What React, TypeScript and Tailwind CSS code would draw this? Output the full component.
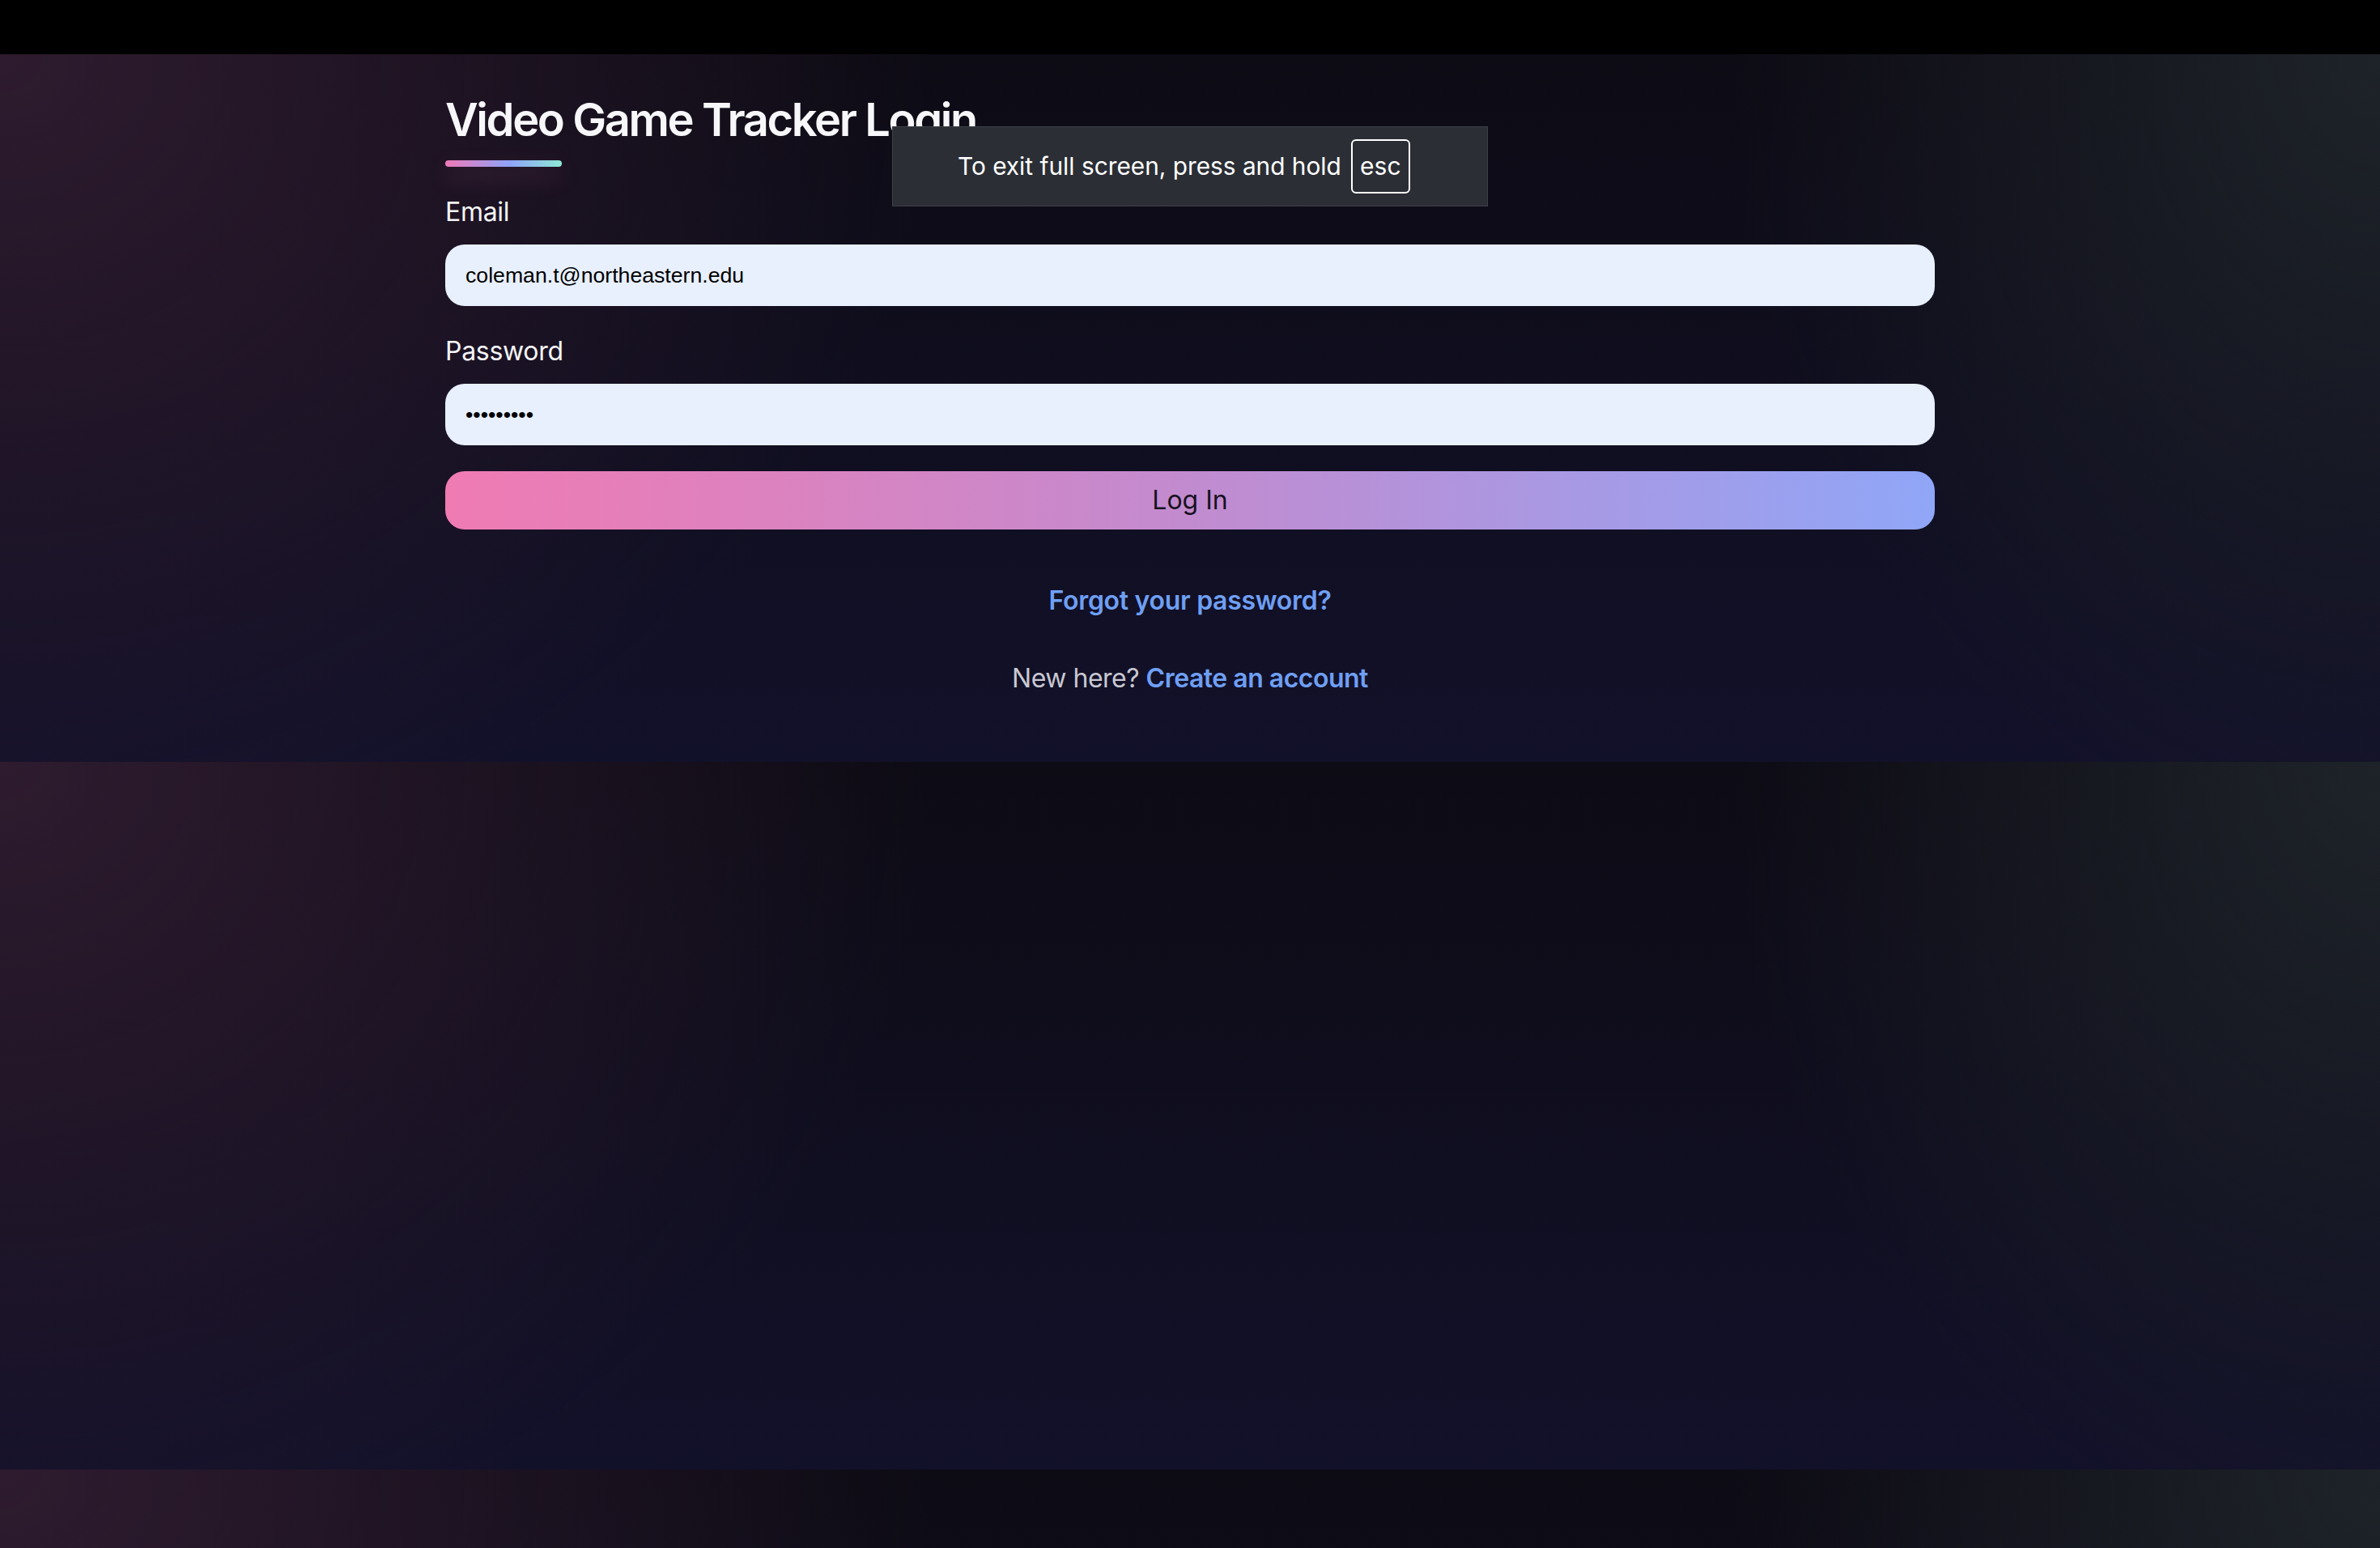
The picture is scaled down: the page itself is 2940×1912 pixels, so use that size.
import { useState } from "react"

const pageBg =
  "bg-[radial-gradient(1150px_1050px_at_0_0,#2e1b2f,transparent),radial-gradient(800px_1000px_at_100%_0,#1e2329,transparent),linear-gradient(180deg,#0d0b14,#12112a)] bg-[length:100%_874px] bg-repeat-y"

function Field({ label, type, value }: { label: string; type: string; value: string }) {
  return (
    <div className="flex flex-col">
      <label className="mb-4 text-[32px] leading-[48px] tracking-[-0.3px] text-[#f4f4f6]">{label}</label>
      <input
        readOnly
        type={type}
        value={value}
        className="h-[76px] w-full rounded-[24px] bg-[#e8f0fe] px-[25px] font-['Liberation_Sans',Arial,sans-serif] text-[26.67px] text-black outline-none"
      />
    </div>
  )
}

export default function App() {
  const [email] = useState("coleman.t@northeastern.edu")

  return (
    <div className="relative flex h-[1912px] flex-col overflow-hidden font-['Inter',sans-serif]">
      <div className="h-[67px] shrink-0 bg-black" />
      <main className={`flex-1 ${pageBg}`}>
        <div className="mx-auto flex w-[1840px] flex-col pt-12">
          <h1 className="text-[56px] leading-[67px] font-semibold tracking-[-2.4px] text-[#f7f7fa]">
            Video Game Tracker Login
          </h1>
          <div className="mt-4 mb-8 h-2 w-[144px] rounded-full bg-[linear-gradient(90deg,#ef79b6,#8ea3f8_55%,#8fe9d5)] shadow-[0_12px_28px_rgba(240,122,180,0.22)]" />

          <div className="flex flex-col gap-8">
            <Field label="Email" type="email" value={email} />
            <Field label="Password" type="password" value="123456789" />
            <button className="h-[72px] w-full rounded-[24px] bg-[linear-gradient(90deg,#f07bb3,#c28bcf_50%,#90a6f7)] text-[32px] text-[#16121f]">
              Log In
            </button>
          </div>

          <div className="mt-16 flex flex-col items-center gap-12 pb-20">
            <a className="text-[32px] leading-[48px] font-semibold tracking-[-0.3px] text-[#6f9ff3]">
              Forgot your password?
            </a>
            <p className="text-[32px] leading-[48px] tracking-[-0.5px] text-[#c9c8d2]">
              New here? <a className="font-semibold text-[#6f9ff3]">Create an account</a>
            </p>
          </div>
        </div>
      </main>

      {/* browser fullscreen notice */}
      <div className="absolute top-[156px] left-[1102px] flex h-[99px] w-[736px] items-center border border-[#3d4047] bg-[#2b2e35] pl-[80px]">
        <span className="text-[29.8px] text-white">To exit full screen, press and hold</span>
        <span className="ml-[12px] flex h-[67px] w-[73px] items-center justify-center rounded-[6px] border-2 border-white text-[30px] text-white">
          esc
        </span>
      </div>
    </div>
  )
}
